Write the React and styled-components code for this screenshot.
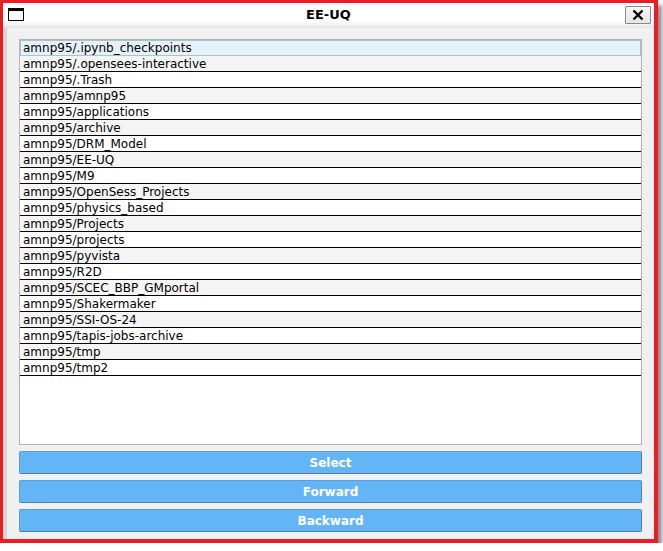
import styled, { createGlobalStyle } from "styled-components"

const folders = [
  ".ipynb_checkpoints",
  ".opensees-interactive",
  ".Trash",
  "amnp95",
  "applications",
  "archive",
  "DRM_Model",
  "EE-UQ",
  "M9",
  "OpenSess_Projects",
  "physics_based",
  "Projects",
  "projects",
  "pyvista",
  "R2D",
  "SCEC_BBP_GMportal",
  "Shakermaker",
  "SSI-OS-24",
  "tapis-jobs-archive",
  "tmp",
  "tmp2",
]

export default function App() {
  return (
    <>
      <GlobalStyle />
      <Frame>
        <TitleBar>
          <WindowIcon />
          <Title>EE-UQ</Title>
          <CloseButton>
            <svg width="12" height="12" viewBox="0 0 12 12">
              <path d="M1.5 1.5 L10.5 10.5 M10.5 1.5 L1.5 10.5" stroke="#000" strokeWidth="2.4" />
            </svg>
          </CloseButton>
        </TitleBar>
        <Body>
          <List>
            {folders.map((name, i) => (
              <Row key={name} $selected={i === 0} $alt={i % 2 === 1}>
                amnp95/{name}
              </Row>
            ))}
          </List>
          <Button>Select</Button>
          <Button>Forward</Button>
          <Button>Backward</Button>
        </Body>
      </Frame>
    </>
  )
}

const GlobalStyle = createGlobalStyle`
  html, body {
    margin: 0;
    padding: 0;
    background: #ffffff;
  }
`

const Frame = styled.div`
  width: 658px;
  height: 543px;
  box-sizing: border-box;
  border: 3px solid #ed1c24;
  border-right-width: 4px;
  border-bottom-width: 4px;
  display: flex;
  flex-direction: column;
  box-shadow: 4px 5px 4px rgba(0, 0, 0, 0.45);
  font-family: "DejaVu Sans", sans-serif;
`

const TitleBar = styled.div`
  height: 25px;
  flex: none;
  position: relative;
  display: flex;
  align-items: center;
  justify-content: center;
  background: linear-gradient(#ffffff 0%, #ffffff 72%, #e4e4e4 100%);
`

const WindowIcon = styled.div`
  position: absolute;
  left: 5px;
  top: 5px;
  width: 16px;
  height: 13px;
  box-sizing: border-box;
  border: 1px solid #000;
  border-top-width: 3px;
  background: #fff;
`

const Title = styled.div`
  font-family: "DejaVu Sans", sans-serif;
  font-weight: bold;
  font-size: 13px;
  color: #000;
  margin-top: -2px;
`

const CloseButton = styled.div`
  position: absolute;
  right: 3px;
  top: 3px;
  width: 26px;
  height: 18px;
  box-sizing: border-box;
  border: 1px solid #8a8a8a;
  border-radius: 1px;
  background: linear-gradient(#f6f6f6, #e6e6e6);
  display: flex;
  align-items: center;
  justify-content: center;
`

const Body = styled.div`
  flex: 1;
  display: flex;
  flex-direction: column;
  gap: 6px;
  background: #f0f0f0;
  border-left: 4px solid #d6d6d6;
  padding: 11px 12px 7px 12px;
`

const List = styled.div`
  flex: 1;
  background: #fff;
  border: 1px solid #b4b4b4;
  display: flex;
  flex-direction: column;
`

const Row = styled.div`
  height: 15px;
  line-height: 17px;
  overflow: hidden;
  padding-left: 3px;
  font-size: 12px;
  color: #000;
  white-space: nowrap;
  background: ${p => (p.$selected ? "#e6f2fa" : p.$alt ? "#f5f5f5" : "#ffffff")};
  border-bottom: 1px solid #000;
  ${p => p.$selected && "outline: 1px solid #a8c2d4; outline-offset: -1px; border-bottom-color: #a8c2d4;"}
`

const Button = styled.div`
  height: 23px;
  flex: none;
  box-sizing: border-box;
  background: #64b5f6;
  border: 1px solid #5a9fd6;
  border-bottom-color: #4f7fa6;
  border-right-color: #4f7fa6;
  border-radius: 2px;
  color: #fff;
  font-family: "DejaVu Sans", sans-serif;
  font-weight: bold;
  font-size: 12px;
  display: flex;
  align-items: center;
  justify-content: center;
`
